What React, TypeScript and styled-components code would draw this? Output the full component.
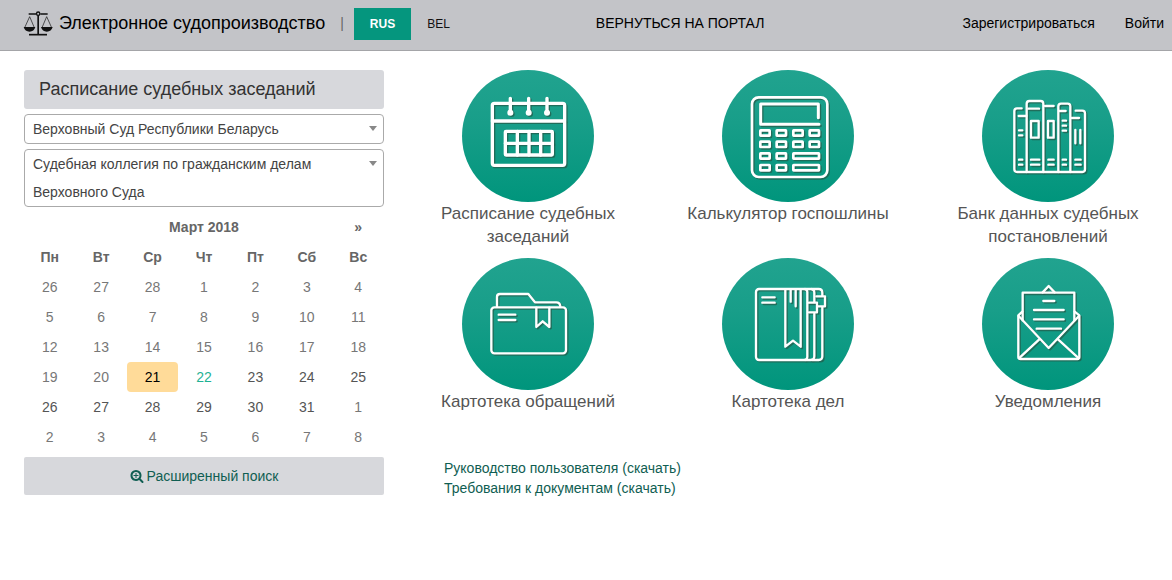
import React from "react";
import styled, { createGlobalStyle } from "styled-components";

const GlobalStyle = createGlobalStyle`
  *, *::before, *::after { box-sizing: border-box; }
  body {
    margin: 0;
    overflow-x: hidden;
    background: #fff;
    color: #555;
    font-family: "Liberation Sans", Arial, sans-serif;
    font-size: 14px;
    line-height: 20px;
  }
  a { text-decoration: none; }
  button, select { font: inherit; }
`;

const Header = styled.header`
  display: flex;
  align-items: flex-start;
  height: 51px;
  padding: 8px 8px 0 23px;
  background: #c3c4c8;
  border-bottom: 1px solid #a4a5a8;
  color: #000;
  white-space: nowrap;
`;

const Brand = styled.a`
  display: flex;
  align-items: center;
  gap: 5px;
  height: 30px;
  color: #000;
  font-size: 18px;
`;

const Separator = styled.span`
  margin: 0 10px 0 15px;
  line-height: 30px;
  color: #666;
`;

const LangButton = styled.button<{ $active?: boolean }>`
  height: 32px;
  padding: 0 16px;
  border: 0;
  background: ${(p) => (p.$active ? "#05967e" : "transparent")};
  color: ${(p) => (p.$active ? "#fff" : "#111")};
  font-size: 12px;
  font-weight: ${(p) => (p.$active ? 700 : 400)};
  cursor: pointer;
`;

const PortalLink = styled.a`
  margin-left: 130px;
  color: #000;
  line-height: 30px;
`;

const Account = styled.nav`
  display: flex;
  gap: 30px;
  margin-left: auto;
  line-height: 30px;

  a { color: #000; }
`;

const Content = styled.div`
  display: flex;
  gap: 14px;
  padding: 19px 0 0 24px;
`;

const Sidebar = styled.aside`
  flex: none;
  width: 360px;
`;

const PanelTitle = styled.h1`
  margin: 0 0 5px;
  padding: 0 15px;
  border-radius: 3px;
  background: #d7d8dc;
  color: #333;
  font-size: 18px;
  font-weight: 400;
  line-height: 39px;
`;

const SelectBox = styled.div`
  position: relative;
  margin-bottom: 5px;

  &::after {
    content: "";
    position: absolute;
    top: 12px;
    right: 7px;
    border: solid transparent;
    border-width: 5px 4px 0;
    border-top-color: #888;
    pointer-events: none;
  }
`;

const Select = styled.select`
  display: block;
  width: 100%;
  min-height: 30px;
  padding: 0 40px 0 8px;
  appearance: none;
  border: 1px solid #aaa;
  border-radius: 4px;
  background: #fff;
  color: #444;
  line-height: 28px;
  white-space: pre-wrap;
`;

const Calendar = styled.table`
  width: 100%;
  table-layout: fixed;
  border-collapse: collapse;

  th, td {
    height: 30px;
    padding: 0;
    text-align: center;
  }
  th { color: #666; }
`;

type DayKind = "past" | "today" | "selected" | "future";

const dayColors: Record<DayKind, string> = {
  past: "#777",
  today: "#000",
  selected: "#1fb294",
  future: "#555",
};

const Day = styled.button<{ $kind: DayKind }>`
  display: block;
  width: 100%;
  height: 30px;
  padding: 0;
  border: 0;
  border-radius: 4px;
  background: ${(p) => (p.$kind === "today" ? "#ffdb99" : "transparent")};
  color: ${(p) => dayColors[p.$kind]};
  cursor: pointer;
`;

const NextMonth = styled.button`
  padding: 0;
  border: 0;
  background: none;
  color: inherit;
  font-weight: 700;
  cursor: pointer;
`;

const SearchButton = styled.button`
  display: flex;
  align-items: center;
  justify-content: center;
  gap: 3px;
  width: 100%;
  height: 38px;
  margin-top: 5px;
  border: 0;
  border-radius: 2px;
  background: #d7d8dc;
  color: #105e52;
  cursor: pointer;
`;

const Main = styled.main`
  flex: 1;
  min-width: 0;
`;

const Services = styled.div`
  display: grid;
  grid-template-columns: repeat(3, 1fr);
  row-gap: 10px;
  margin-right: -6px;
`;

const Service = styled.a`
  display: flex;
  flex-direction: column;
  align-items: center;
  padding: 0 20px;
  color: #555;
  font-size: 17px;
  line-height: 23px;
  text-align: center;
`;

const ServiceIcon = styled.svg`
  display: block;
  width: 132px;
  height: 132px;
  fill: none;
  stroke-linecap: round;
  stroke-linejoin: round;
`;

const Docs = styled.div`
  display: flex;
  flex-direction: column;
  align-items: flex-start;
  margin: 45px 0 0 46px;

  a { color: #105e52; }
`;

const ScalesIcon = () => (
  <svg width="31" height="26" viewBox="69 30 93 78" fill="none" stroke="#111" aria-hidden="true">
    <path d="M86 42H108M121 42H143" strokeWidth="5" />
    <circle cx="114.5" cy="41" r="5" strokeWidth="4" />
    <path d="M114.5 46V103" strokeWidth="5" />
    <path d="M87 104H141" strokeWidth="5" />
    <path d="M89 50L74 83M89 50L103 83M140 50L126 83M140 50L155 83" strokeWidth="2" />
    <path d="M71 81H106Q102 95 88.5 95Q75 95 71 81ZM123 81H158Q154 95 140.5 95Q127 95 123 81Z" fill="#111" stroke="none" />
  </svg>
);

const SearchPlusIcon = () => (
  <svg width="14" height="14" viewBox="0 0 1792 1792" fill="currentColor" aria-hidden="true">
    <path d="M1088 800v64q0 13-9.5 22.5t-22.5 9.5h-224v224q0 13-9.5 22.5t-22.5 9.5h-64q-13 0-22.5-9.5t-9.5-22.5v-224h-224q-13 0-22.5-9.5t-9.5-22.5v-64q0-13 9.5-22.5t22.5-9.5h224v-224q0-13 9.5-22.5t22.5-9.5h64q13 0 22.5 9.5t9.5 22.5v224h224q13 0 22.5 9.5t9.5 22.5zm128 32q0-185-131.5-316.5t-316.5-131.5-316.5 131.5-131.5 316.5 131.5 316.5 316.5 131.5 316.5-131.5 131.5-316.5zm512 832q0 53-37.5 90.5t-90.5 37.5q-54 0-90-38l-343-342q-179 124-399 124-143 0-273.5-55.5t-225-150-150-225-55.5-273.5 55.5-273.5 150-225 225-150 273.5-55.5 273.5 55.5 225 150 150 225 55.5 273.5q0 220-124 399l343 343q37 37 37 90z" />
  </svg>
);

const calendarArt = (
  <g strokeWidth="10">
    <rect x="112" y="115" width="217" height="186" rx="6" />
    <path d="M112 168H328" />
    <rect x="151" y="199" width="141" height="71" rx="2" />
    <path d="M151 235H292M187 199V270M222 199V270M257 199V270" />
    <path d="M166 100V140M221 100V140M276 100V140" />
    <path d="M166 143h.1M221 143h.1M276 143h.1" strokeWidth="18" />
  </g>
);

const key = (x: number, y: number, w = 28) => (
  <rect key={`${x}-${y}`} x={x} y={y} width={w} height="16" rx="1" />
);

const calculatorArt = (
  <g strokeWidth="8">
    <rect x="111" y="97" width="226" height="239" rx="20" />
    <path d="M310 158V117H137V178H312" strokeWidth="9" />
    {[136, 185, 235, 284].map((x) => key(x, 196))}
    {[136, 185, 235, 284].map((x) => key(x, 230))}
    {[136, 185].map((x) => key(x, 265))}
    {key(235, 265, 77)}
    {[136, 185].map((x) => key(x, 300))}
    {key(235, 300, 77)}
  </g>
);

const booksArt = (
  <g strokeWidth="7">
    <path d="M140 130H126Q118 130 118 138V313Q118 321 126 321H322Q330 321 330 313V145Q330 137 322 137H302" />
    <path d="M155 321V116Q155 108 163 108H197Q205 108 205 116V321" />
    <path d="M250 321V124Q250 116 258 116H278Q286 116 286 124V321" />
    <path d="M131 153H154M160 131H192M210 123H236M253 138H272M290 159H312" />
    <path d="M168 168H191V218H168ZM219 168H236V218H219Z" />
    <path d="M132 196H142M132 211H142M263 167H273M263 182H273M263 197H273M301 195V235M316 195V235" />
    <path d="M132 284H142M132 299H142M168 284H193M168 299H193M220 284H236M220 299H236M263 284H273M263 299H273M301 284H317M301 299H317" />
  </g>
);

const folderArt = (
  <g strokeWidth="7">
    <rect x="109" y="163" width="224" height="138" rx="9" />
    <path d="M126 161V132Q126 123 135 123H220L240 148H304Q315 148 316 160" />
    <path d="M131 185H181M131 201H181" />
    <path d="M244 164V222L263 205L283 222V164" />
  </g>
);

const binderArt = (
  <g strokeWidth="7">
    <rect x="123" y="108" width="154" height="213" rx="9" />
    <path d="M270 108H287Q298 108 298 119V147M298 182V310Q298 321 287 321H270" />
    <path d="M290 108H311Q322 108 322 119V128M322 163V310Q322 321 311 321H290" />
    <path d="M282 149H306V178H282M304 130H330V160H310" />
    <path d="M142 133H179M142 149H179" />
    <path d="M211 110V281L234 263L257 281V110M227 110V146M242 110V160" />
  </g>
);

const letterArt = (
  <g strokeWidth="7">
    <path d="M143 202V119H298V202" />
    <path d="M203 118L221 99L239 118" />
    <path d="M142 176L130 187V312Q130 318 136 318H307Q313 318 313 312V187L299 176" />
    <path d="M131 189L221 285L312 189M134 314L192 260M309 314L250 260" />
    <path d="M205 144H238M177 171H266M177 199H266M185 227H258" />
  </g>
);

const services: { title: string; art: React.ReactNode }[] = [
  { title: "Расписание судебных заседаний", art: calendarArt },
  { title: "Калькулятор госпошлины", art: calculatorArt },
  { title: "Банк данных судебных постановлений", art: booksArt },
  { title: "Картотека обращений", art: folderArt },
  { title: "Картотека дел", art: binderArt },
  { title: "Уведомления", art: letterArt },
];

const weekdays = ["Пн", "Вт", "Ср", "Чт", "Пт", "Сб", "Вс"];

const weeks = [
  [26, 27, 28, 1, 2, 3, 4],
  [5, 6, 7, 8, 9, 10, 11],
  [12, 13, 14, 15, 16, 17, 18],
  [19, 20, 21, 22, 23, 24, 25],
  [26, 27, 28, 29, 30, 31, 1],
  [2, 3, 4, 5, 6, 7, 8],
];

// Position in the grid decides the state: the 21st is cell 23 and is today.
const kindOf = (index: number): DayKind => {
  if (index === 23) return "today";
  if (index === 24) return "selected";
  return index > 24 && index < 34 ? "future" : "past";
};

export default function App() {
  return (
    <>
      <GlobalStyle />
      <Header>
        <Brand href="#">
          <ScalesIcon />
          Электронное судопроизводство
        </Brand>
        <Separator>|</Separator>
        <LangButton $active>RUS</LangButton>
        <LangButton>BEL</LangButton>
        <PortalLink href="#">ВЕРНУТЬСЯ НА ПОРТАЛ</PortalLink>
        <Account>
          <a href="#">Зарегистрироваться</a>
          <a href="#">Войти</a>
        </Account>
      </Header>
      <Content>
        <Sidebar>
          <PanelTitle>Расписание судебных заседаний</PanelTitle>
          <SelectBox>
            <Select aria-label="Суд">
              <option>Верховный Суд Республики Беларусь</option>
            </Select>
          </SelectBox>
          <SelectBox>
            <Select aria-label="Судебная коллегия">
              <option>Судебная коллегия по гражданским делам Верховного Суда</option>
            </Select>
          </SelectBox>
          <Calendar>
            <thead>
              <tr>
                <td />
                <th colSpan={5}>Март 2018</th>
                <th><NextMonth>»</NextMonth></th>
              </tr>
              <tr>
                {weekdays.map((d) => <th key={d} scope="col">{d}</th>)}
              </tr>
            </thead>
            <tbody>
              {weeks.map((week, w) => (
                <tr key={w}>
                  {week.map((day, d) => (
                    <td key={d}><Day $kind={kindOf(w * 7 + d)}>{day}</Day></td>
                  ))}
                </tr>
              ))}
            </tbody>
          </Calendar>
          <SearchButton>
            <SearchPlusIcon />
            Расширенный поиск
          </SearchButton>
        </Sidebar>
        <Main>
          <Services>
            {services.map(({ title, art }) => (
              <Service key={title} href="#">
                <ServiceIcon viewBox="21 15 396 396" aria-hidden="true">
                  <defs>
                    <linearGradient id="disc" x1="0" y1="0" x2="0" y2="1">
                      <stop offset="0" stopColor="#21a38f" />
                      <stop offset="0.4" stopColor="#189e89" />
                      <stop offset="1" stopColor="#00957c" />
                    </linearGradient>
                  </defs>
                  <circle cx="219" cy="213" r="198" fill="url(#disc)" />
                  <g stroke="#23604f" strokeOpacity="0.8" transform="translate(4 4)">{art}</g>
                  <g stroke="#fff">{art}</g>
                </ServiceIcon>
                {title}
              </Service>
            ))}
          </Services>
          <Docs>
            <a href="#">Руководство пользователя (скачать)</a>
            <a href="#">Требования к документам (скачать)</a>
          </Docs>
        </Main>
      </Content>
    </>
  );
}
